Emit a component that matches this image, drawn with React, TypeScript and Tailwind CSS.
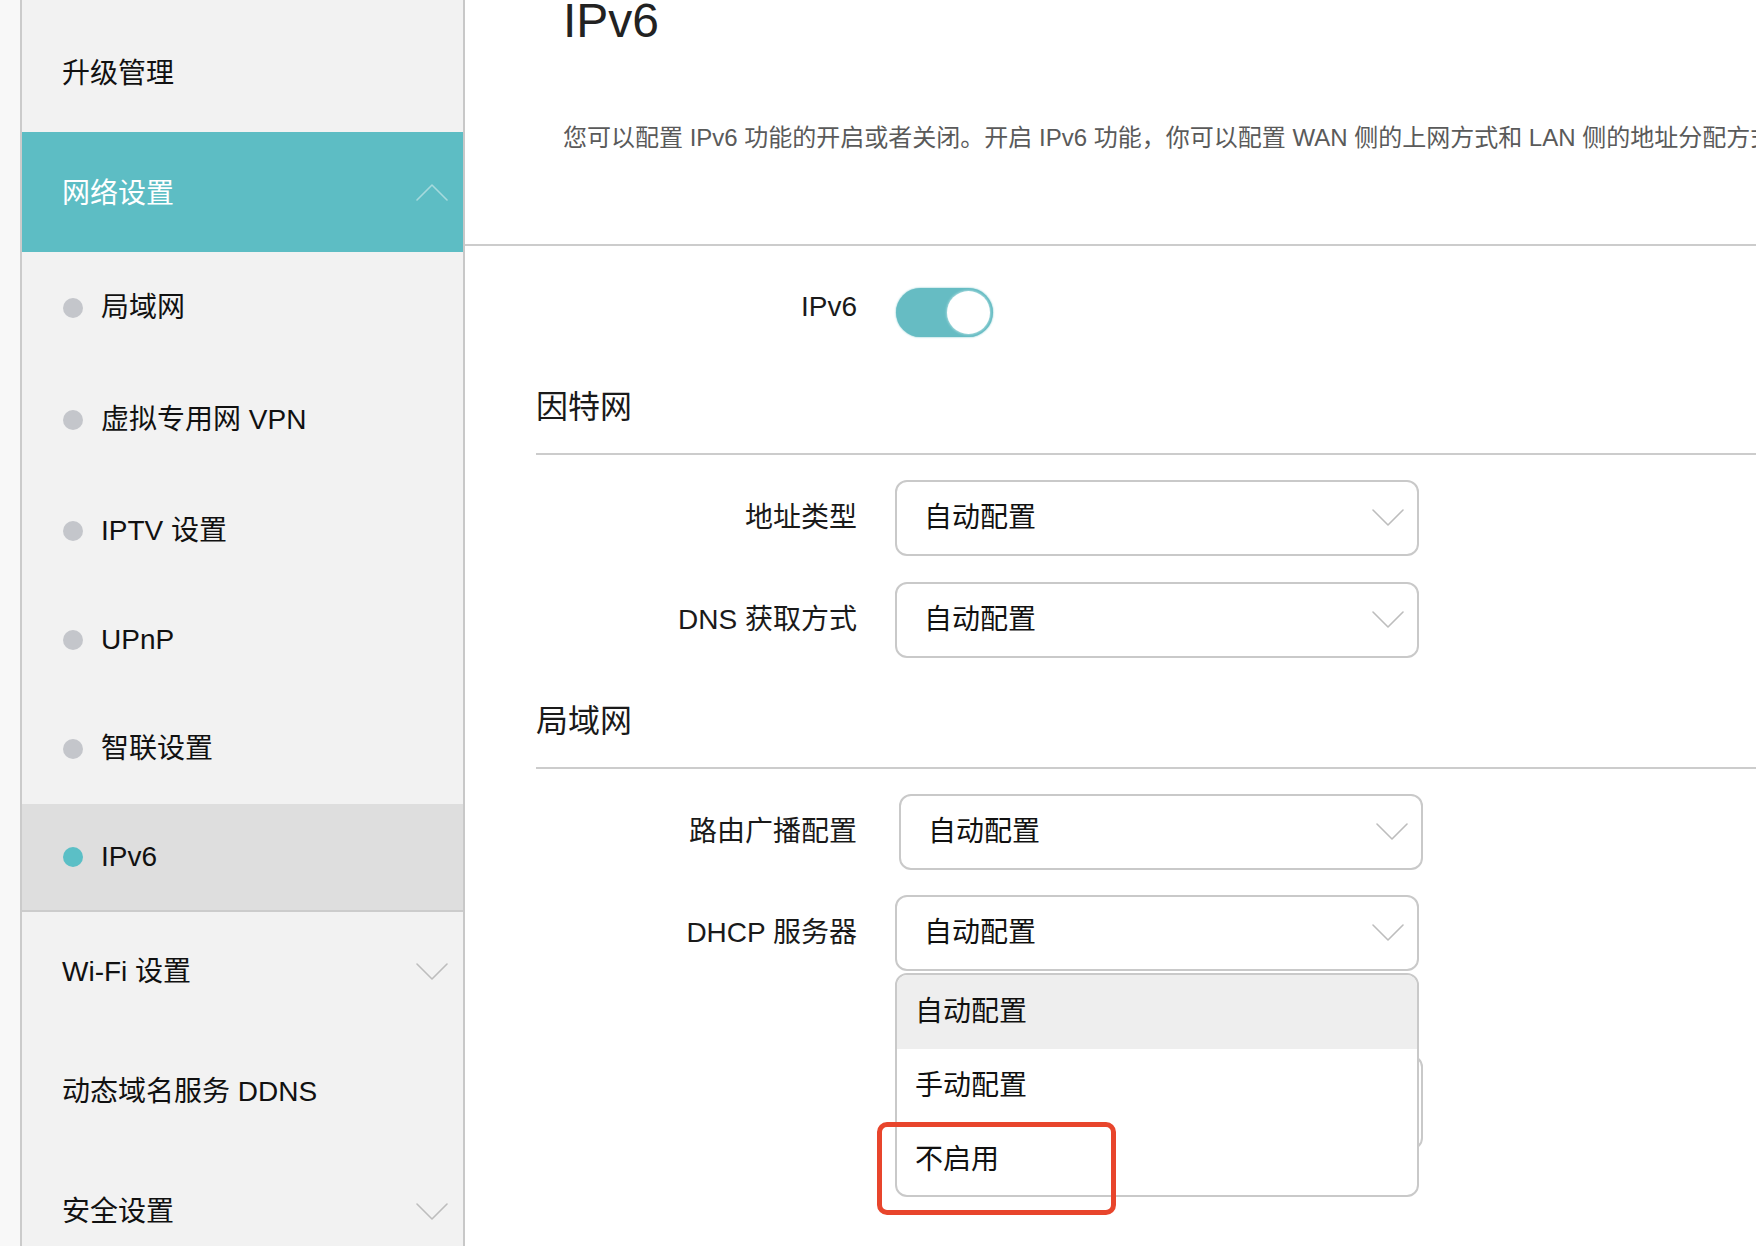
import React from "react";

const font = "font-['Liberation_Sans','Noto_Sans_CJK_SC',sans-serif]";

function Chevron({ up = false, color = "#bdbdbd" }: { up?: boolean; color?: string }) {
  return (
    <svg width="32" height="18" viewBox="0 0 32 18" fill="none">
      <polyline
        points={up ? "1,17 16,2 31,17" : "1,1 16,16 31,1"}
        stroke={color}
        strokeWidth="1.6"
        strokeLinecap="round"
        strokeLinejoin="round"
      />
    </svg>
  );
}

function Select({ value, shift = false }: { value: string; shift?: boolean }) {
  return (
    <div
      className={`${shift ? "ml-[42px]" : "ml-[38px]"} w-[524px] h-[76px] border-2 border-[#c9c9c9] rounded-[12px] flex items-center justify-between pl-[27px] pr-[13px] text-[28px] leading-[36px] text-[#111] bg-white`}
    >
      <span>{value}</span>
      <Chevron />
    </div>
  );
}

function Row({ label, children, cls = "" }: { label: string; children: React.ReactNode; cls?: string }) {
  return (
    <div className={`flex items-center ${cls}`}>
      <div className="w-[321px] shrink-0 text-right text-[28px] leading-[36px] text-[#1a1a1a] whitespace-nowrap">
        {label}
      </div>
      {children}
    </div>
  );
}

function SectionHeader({ title, cls = "" }: { title: string; cls?: string }) {
  return (
    <div className={`border-b-2 border-[#cccccc] pb-[26px] ${cls}`}>
      <div className="text-[32px] leading-[40px] text-[#1a1a1a]">{title}</div>
    </div>
  );
}

export default function App() {
  const subs: { label: string; h: string }[] = [
    { label: "局域网", h: "h-[112px]" },
    { label: "虚拟专用网 VPN", h: "h-[112px]" },
    { label: "IPTV 设置", h: "h-[110px]" },
    { label: "UPnP", h: "h-[108px]" },
    { label: "智联设置", h: "h-[110px]" },
  ];
  return (
    <div className={`${font} w-[1756px] h-[1246px] overflow-hidden flex bg-white`}>
      {/* left strip */}
      <div className="w-[22px] shrink-0 bg-[#f8f8f8] border-r-2 border-[#cbcbcb]" />
      {/* sidebar */}
      <aside className="w-[443px] shrink-0 bg-[#f2f2f2] border-r-2 border-[#c8c8c8] pt-[12px] flex flex-col text-[28px] leading-[36px] text-[#111]">
        <div className="h-[120px] shrink-0 flex items-center pl-[40px] pt-[4px]">升级管理</div>
        <div className="h-[120px] shrink-0 flex items-center justify-between pl-[40px] pr-[15px] bg-[#5dbdc4] text-white">
          <span className="pt-[4px]">网络设置</span>
          <Chevron up color="#a6dadd" />
        </div>
        <div className="border-b-2 border-[#cccccc]">
          {subs.map((s) => (
            <div key={s.label} className={`${s.h} flex items-center pl-[41px] gap-[18px]`}>
              <span className="w-[20px] h-[20px] rounded-full bg-[#c4c6cb] shrink-0" />
              <span>{s.label}</span>
            </div>
          ))}
          <div className="h-[106px] flex items-center pl-[41px] gap-[18px] bg-[#dedede]">
            <span className="w-[20px] h-[20px] rounded-full bg-[#5bbfc6] shrink-0" />
            <span>IPv6</span>
          </div>
        </div>
        <div className="h-[120px] shrink-0 flex items-center justify-between pl-[40px] pr-[15px]">
          <span>Wi-Fi 设置</span>
          <Chevron />
        </div>
        <div className="h-[120px] shrink-0 flex items-center pl-[40px]">动态域名服务 DDNS</div>
        <div className="h-[120px] shrink-0 flex items-center justify-between pl-[40px] pr-[15px]">
          <span>安全设置</span>
          <Chevron />
        </div>
      </aside>

      {/* main */}
      <main className="flex-1 relative overflow-hidden">
        <div className="h-[249px] border-b-2 border-[#cccccc] pl-[98px]">
          <h1 className="-mt-[3px] text-[48px] leading-[48px] text-[#222]">IPv6</h1>
          <p className="mt-[77px] text-[24px] leading-[32px] text-[#5a5a5a] whitespace-nowrap">
            您可以配置 IPv6 功能的开启或者关闭。开启 IPv6 功能，你可以配置 WAN 侧的上网方式和 LAN 侧的地址分配方式。
          </p>
        </div>

        <div className="pl-[71px]">
          <div className="flex items-center mt-[42px] h-[49px]">
            <div className="w-[321px] shrink-0 text-right text-[28px] leading-[36px] text-[#1a1a1a] pb-[12px]">
              IPv6
            </div>
            <div className="ml-[39px] w-[97px] h-[49px] rounded-full bg-[#66bcc3] flex items-center justify-end pr-[3px] shadow-[0_0_2px_#66bcc3]">
              <div className="w-[43px] h-[43px] rounded-full bg-white shadow-[0_0_2px_1px_#9fd6da]" />
            </div>
          </div>

          <SectionHeader title="因特网" cls="mt-[50px]" />
          <Row label="地址类型" cls="mt-[25px]">
            <Select value="自动配置" />
          </Row>
          <Row label="DNS 获取方式" cls="mt-[26px]">
            <Select value="自动配置" />
          </Row>

          <SectionHeader title="局域网" cls="mt-[43px]" />
          <Row label="路由广播配置" cls="mt-[25px]">
            <Select value="自动配置" shift />
          </Row>
          <Row label="DHCP 服务器" cls="mt-[25px]">
            <Select value="自动配置" />
          </Row>
          <div className="mt-[84px] ml-[363px] w-[524px] h-[95px] border-2 border-[#c9c9c9] rounded-[12px]" />
        </div>

        {/* dropdown menu */}
        <div className="absolute left-[430px] top-[973px] w-[524px] h-[224px] bg-white border-2 border-[#c9c9c9] rounded-[12px] overflow-hidden text-[28px] leading-[36px] text-[#111]">
          <div className="h-[74px] flex items-center pl-[18px] bg-[#eeeeee]">自动配置</div>
          <div className="h-[74px] flex items-center pl-[18px]">手动配置</div>
          <div className="h-[74px] flex items-center pl-[18px]">不启用</div>
        </div>

        {/* red annotation */}
        <div className="absolute left-[412px] top-[1122px] w-[239px] h-[93px] border-[5px] border-[#e8452c] rounded-[10px]" />
      </main>
    </div>
  );
}
